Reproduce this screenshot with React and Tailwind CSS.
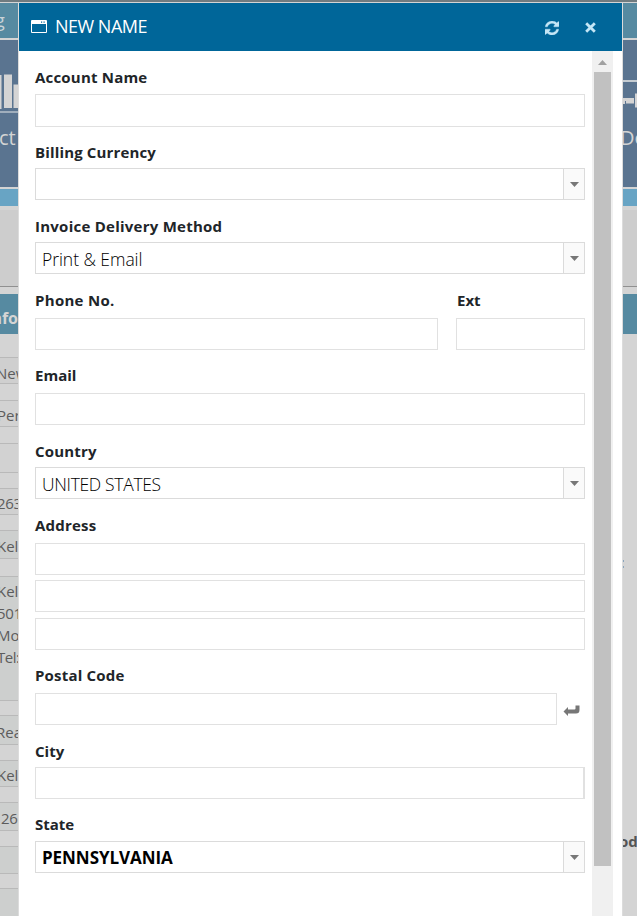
import React from "react";

const FONT = "font-['Open_Sans','Noto_Sans',sans-serif]";

function Label({ children, className = "tracking-[0.2px]" }) {
  return (
    <div className={`h-5 text-[15px] leading-5 font-bold text-[#212529] whitespace-nowrap ${className}`}>
      {children}
    </div>
  );
}

function Box({ className = "" }) {
  return <div className={`border border-[#e1e1e1] bg-white ${className}`} />;
}

function Select({ children, className = "" }) {
  return (
    <div className={`flex h-8 w-[550px] border border-[#dbdbdb] bg-white ${className}`}>
      <div className="flex-1 pl-[6px] leading-[32px] text-black whitespace-nowrap">{children}</div>
      <div className="flex w-[21px] items-center justify-center border-l border-[#dbdbdb] bg-[#fafafa]">
        <svg className="ml-px mt-px" width="9" height="5" viewBox="0 0 9 5"><path d="M0 0H9L4.5 5Z" fill="#777" /></svg>
      </div>
    </div>
  );
}

function Row({ className = "", tone = "bg-[#cdcfce]", children }) {
  return (
    <div className={`flex-none overflow-hidden border-y border-[#b9b9b9] text-[15px] leading-[22px] text-[#5c5c5c] whitespace-nowrap ${tone} ${className}`}>
      {children}
    </div>
  );
}

function LeftStrip() {
  return (
    <div className="flex h-full w-[18px] flex-none flex-col overflow-hidden bg-[#d4d4d4]">
      <div className="h-[2px] flex-none bg-[#707b80]" />
      <div className="mt-px h-[35px] flex-none bg-[#568aa1] text-[18px] leading-[35px] text-[#c9d3d8]"><span className="-ml-[5px]">g</span></div>
      <div className="mt-[2px] h-[147px] flex-none bg-[#5a7490]">
        <svg className="block" width="18" height="80" viewBox="0 0 18 80">
          <path d="M0 35h1.500v34H0zM4 34.500h8v33.500H4zM13.500 44.500h6v23.500h-6z" fill="#d4d4d4" />
          <path d="M0 72h18" stroke="#b8c2cb" strokeWidth="1.500" />
        </svg>
        <div className="text-[20px] leading-[36px] text-[#d4d4d4]"><span className="-ml-px">ct</span></div>
      </div>
      <div className="mt-[2px] h-[17px] flex-none bg-[#68a4c4]" />
      <div className="mt-[4px] h-[77px] flex-none border-b border-[#909090] bg-[#cdcdcd]" />
      <div className="mt-[7px] flex h-[40px] flex-none items-center justify-end bg-[#568aa1] text-[16px] font-bold text-[#d4d4d4]"><span className="mt-[8px]">nfo</span></div>
      <Row className="mt-[23px] h-[27px]" tone="bg-[#cfcfcf]"><div className="-ml-[4px] mt-[4px]">New</div></Row>
      <Row className="mt-[16px] h-[27px]" tone="bg-[#d2d2d2]"><div className="-ml-[3px] mt-[3px]">Per</div></Row>
      <Row className="mt-[16px] h-[30px]" tone="bg-[#d2d2d2]" />
      <Row className="mt-[15px] h-[27px]" tone="bg-[#d0d0d0]"><div className="-ml-[3px] mt-[3px] tracking-[-0.300px]">263</div></Row>
      <Row className="mt-[15px] h-[29px]"><div className="-ml-[3px] mt-[4px]">Kelly</div></Row>
      <Row className="mt-[17px] h-[125px]">
        <div className="-ml-[3px] mt-[3px]"><div>Kelly</div><div className="tracking-[-0.300px]">501</div><div>Mo</div><div className="tracking-[-0.500px]">Tel:</div></div>
      </Row>
      <Row className="mt-[14px] h-[30px]"><div className="-ml-[4px] mt-[5px]">Rea</div></Row>
      <Row className="mt-[15px] h-[27px]"><div className="-ml-[3px] mt-[3px]">Kelly</div></Row>
      <Row className="mt-[15px] h-[29px]"><div className="mt-[4px] ml-px tracking-[-0.300px]">26</div></Row>
      <Row className="mt-[15px] h-[28px]" />
      <Row className="mt-[14px] h-[40px]" />
    </div>
  );
}

function RightStrip() {
  return (
    <div className="flex h-full w-[14px] flex-none flex-col overflow-hidden bg-[#d4d4d4] whitespace-nowrap">
      <div className="h-[2px] flex-none bg-[#707b80]" />
      <div className="mt-px h-[35px] flex-none bg-[#568aa1]" />
      <div className="mt-[2px] h-[147px] flex-none bg-[#5a7490]">
        <svg className="block" width="14" height="80" viewBox="0 0 14 80">
          <path d="M0 41h14" stroke="#c5ccd2" strokeWidth="2" />
          <path d="M0 58h11v3H0zM3 61h8v2.500H3zM0 61h2v3H0z" fill="#d4d4d4" />
          <path d="M15 54.500h-2v12h2" stroke="#d4d4d4" strokeWidth="2" fill="none" />
        </svg>
        <div className="-ml-[3px] text-[20px] leading-[36px] text-[#d4d4d4]">De</div>
      </div>
      <div className="mt-[2px] h-[17px] flex-none bg-[#68a4c4]" />
      <div className="mt-[4px] h-[77px] flex-none border-b border-[#909090] bg-[#cdcdcd]" />
      <div className="mt-[7px] h-[40px] flex-none bg-[#568aa1]" />
      <div className="mt-[226px] h-[8px] w-px flex-none border-y-2 border-[#8aa5bc]" />
      <div className="-ml-[4px] mt-[262px] text-[15px] leading-[22px] font-bold text-[#555]">od</div>
    </div>
  );
}

export default function App() {
  return (
    <div className={`flex h-[916px] w-[637px] overflow-hidden bg-[#d4d4d4] ${FONT}`}>
      <LeftStrip />
      <div className="flex w-[605px] flex-none flex-col">
        <div className="h-[2px] flex-none bg-[#707b80]" />
        <div className="h-px flex-none bg-[#d4d4d4]" />
        <div className="flex min-h-0 flex-1 flex-col border-x border-[#dcdcdc] bg-white">
          <div className="flex h-12 flex-none items-center bg-[#006699] text-white">
            <svg className="-mt-px ml-3" width="16" height="13" viewBox="0 0 16 13">
              <path fillRule="evenodd" d="M1 0H15Q16 0 16 1V12Q16 13 15 13H1Q0 13 0 12V1Q0 0 1 0ZM1 4V12H15V4Z" fill="#fff" />
              <path d="M10 1.500h1.200v1.200h-1.200zM12.500 1.500h1.200v1.200h-1.200z" fill="#069" />
            </svg>
            <div className="-mt-[2px] ml-2 flex-1 text-[18px] leading-6 tracking-[-0.500px]">NEW NAME</div>
            <svg className="mt-[2px] mr-[26px]" width="14" height="14" viewBox="0 0 1536 1536">
              <path fill="#c4e6f6" stroke="#c4e6f6" strokeWidth="40" d="M1511 928q0 5-1 7-64 268-268 434.500T764 1536q-146 0-282.500-55T238 1324l-129 129q-19 19-45 19t-45-19-19-45V960q0-26 19-45t45-19h448q26 0 45 19t19 45-19 45l-137 137q71 66 161 102t187 36q134 0 250-65t186-179q11-17 53-117 8-23 30-23h192q13 0 22.500 9.500t9.500 22.500zm25-800v448q0 26-19 45t-45 19h-448q-26 0-45-19t-19-45 19-45l138-138Q969 256 768 256q-134 0-250 65T332 500q-11 17-53 117-8 23-30 23H50q-13 0-22.500-9.500T18 608v-7q65-268 270-434.500T768 0q146 0 284 55.500T1297 212l130-129q19-19 45-19t45 19 19 45z" />
            </svg>
            <svg className="mt-px mr-[26px]" width="11" height="11" viewBox="0 0 11 11"><path d="M1.200 1.200L9.800 9.800M9.800 1.200L1.200 9.800" stroke="#c4e6f6" strokeWidth="2.800" /></svg>
          </div>
          <div className="flex min-h-0 flex-1">
            <div className="w-[573px] flex-none pt-4 pl-4">
              <Label>Account Name</Label>
              <Box className="mt-[7px] h-[33px] w-[550px]" />
              <div className="mt-[15px]"><Label className="tracking-[0.150px]">Billing Currency</Label></div>
              <Select className="mt-[6px]" />
              <div className="mt-4"><Label className="tracking-[0.250px]">Invoice Delivery Method</Label></div>
              <Select className="mt-[6px]"><span className="text-[17.5px] font-light tracking-[-0.050px]">Print &amp; Email</span></Select>
              <div className="mt-4 flex">
                <div className="w-[422px]"><Label className="tracking-[0.300px]">Phone No.</Label><Box className="mt-[8px] h-8 w-[403px]" /></div>
                <div><Label className="tracking-normal">Ext</Label><Box className="mt-[8px] -ml-px h-8 w-[129px]" /></div>
              </div>
              <div className="mt-[15px]"><Label className="tracking-normal">Email</Label></div>
              <Box className="mt-[8px] h-8 w-[550px]" />
              <div className="mt-4"><Label>Country</Label></div>
              <Select className="mt-[6px]"><span className="text-[17.5px] font-light tracking-[-0.320px]">UNITED STATES</span></Select>
              <div className="mt-4"><Label>Address</Label></div>
              <Box className="mt-[8px] h-8 w-[550px]" />
              <Box className="mt-[5px] h-8 w-[550px]" />
              <Box className="mt-[6px] h-8 w-[550px]" />
              <div className="mt-[15px]"><Label>Postal Code</Label></div>
              <div className="mt-[8px] flex items-center">
                <Box className="h-8 w-[522px]" />
                <svg className="mt-[3px] ml-[6px]" width="17" height="12" viewBox="0 0 17 12"><path d="M0.500 6.500L5 2V4.500H11.500Q12.500 4.500 12.500 3.500V0.500H16.500V5Q16.500 8.500 13 8.500H5V11Z" fill="#777" /></svg>
              </div>
              <div className="mt-4"><Label className="tracking-normal">City</Label></div>
              <Box className="mt-[6px] h-8 w-[550px] border-r-2" />
              <div className="mt-[15px]"><Label className="tracking-normal">State</Label></div>
              <Select className="mt-[7px]"><span className="text-[17px] font-bold tracking-[-0.050px]">PENNSYLVANIA</span></Select>
            </div>
            <div className="flex w-[21px] flex-none flex-col items-center bg-[#f0f0f0]">
              <svg className="mt-[9px] flex-none" width="9" height="5" viewBox="0 0 9 5"><path d="M0 5L4.500 0L9 5Z" fill="#a0a0a0" /></svg>
              <div className="mt-[7px] h-[794px] w-[17px] flex-none bg-[#c1c1c1]" />
            </div>
          </div>
        </div>
      </div>
      <RightStrip />
    </div>
  );
}
